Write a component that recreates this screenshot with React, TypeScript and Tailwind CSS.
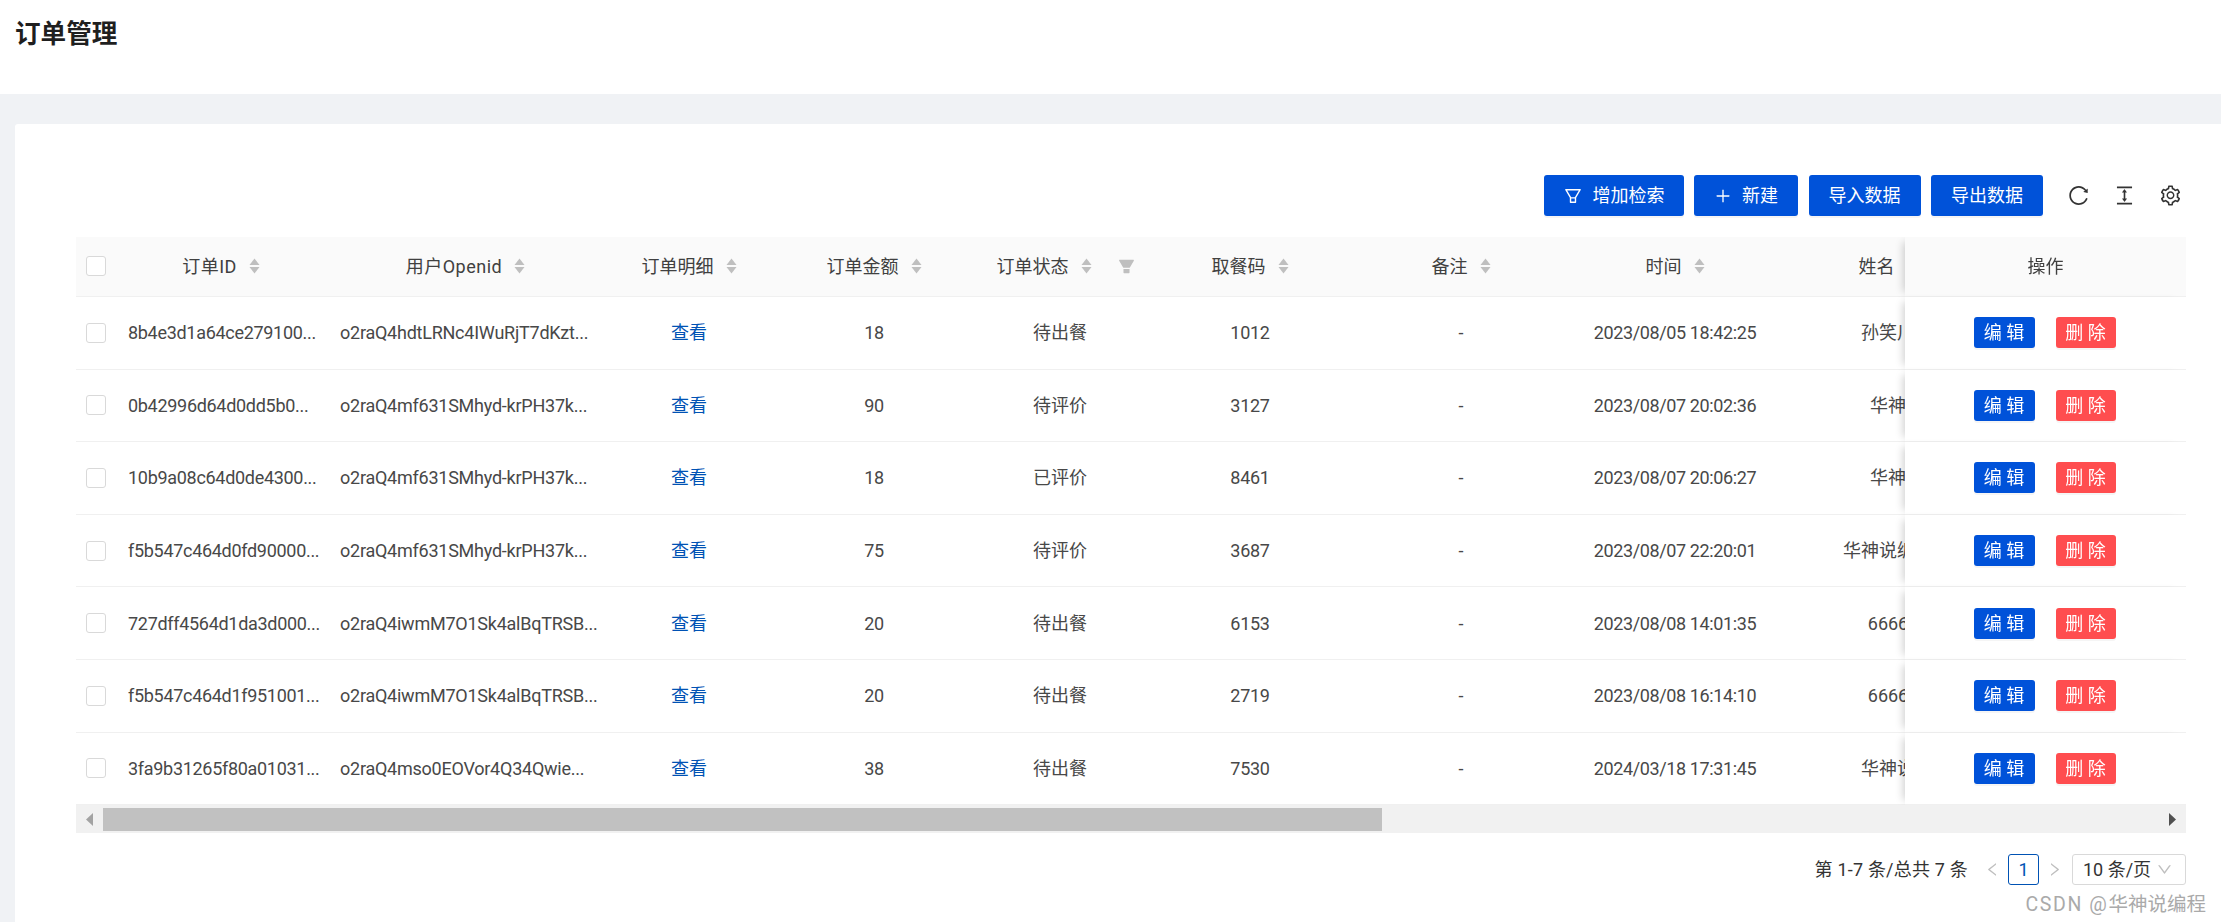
import {
  AiFillFilter,
  AiOutlineColumnHeight,
  AiOutlineDown,
  AiOutlineFilter,
  AiOutlineLeft,
  AiOutlinePlus,
  AiOutlineReload,
  AiOutlineRight,
  AiOutlineSetting
} from 'react-icons/ai'

type Order = {
  id: string
  openid: string
  amount: number
  status: string
  code: number
  time: string
  name: string
}

const ORDERS: Order[] = [
  { id: '8b4e3d1a64ce279100...', openid: 'o2raQ4hdtLRNc4IWuRjT7dKzt...', amount: 18, status: '待出餐', code: 1012, time: '2023/08/05 18:42:25', name: '孙笑川' },
  { id: '0b42996d64d0dd5b0...', openid: 'o2raQ4mf631SMhyd-krPH37k...', amount: 90, status: '待评价', code: 3127, time: '2023/08/07 20:02:36', name: '华神' },
  { id: '10b9a08c64d0de4300...', openid: 'o2raQ4mf631SMhyd-krPH37k...', amount: 18, status: '已评价', code: 8461, time: '2023/08/07 20:06:27', name: '华神' },
  { id: 'f5b547c464d0fd90000...', openid: 'o2raQ4mf631SMhyd-krPH37k...', amount: 75, status: '待评价', code: 3687, time: '2023/08/07 22:20:01', name: '华神说编程' },
  { id: '727dff4564d1da3d000...', openid: 'o2raQ4iwmM7O1Sk4alBqTRSB...', amount: 20, status: '待出餐', code: 6153, time: '2023/08/08 14:01:35', name: '6666' },
  { id: 'f5b547c464d1f951001...', openid: 'o2raQ4iwmM7O1Sk4alBqTRSB...', amount: 20, status: '待出餐', code: 2719, time: '2023/08/08 16:14:10', name: '6666' },
  { id: '3fa9b31265f80a01031...', openid: 'o2raQ4mso0EOVor4Q34Qwie...', amount: 38, status: '待出餐', code: 7530, time: '2024/03/18 17:31:45', name: '华神说' }
]

function Checkbox() {
  return <span className="block mx-auto w-5 h-5 bg-white border border-[#d9d9d9] rounded-[3px]" />
}

function SortIcon() {
  return (
    <svg className="w-[11px] h-[16px] ml-3 shrink-0" viewBox="0 0 11 16" fill="#bfbfbf">
      <path d="M5.500 0.500 10.500 7H0.500z" />
      <path d="M0.500 9H10.500L5.500 15.500z" />
    </svg>
  )
}

function HeadLabel({ label, sort = true, wide = false }: { label: string; sort?: boolean; wide?: boolean }) {
  return (
    <div className="flex items-center justify-center">
      <span className={wide ? 'whitespace-nowrap tracking-[0.5px]' : 'whitespace-nowrap'}>{label}</span>
      {sort && <SortIcon />}
    </div>
  )
}

function ToolButton({ icon, label, width }: { icon?: React.ReactNode; label: string; width: string }) {
  return (
    <button className={`flex items-center justify-center h-[41px] ${width} gap-[10px] bg-[#0052d9] text-white text-[18px] rounded-[3px] shadow-[0_2px_0_rgba(0,0,0,0.04)]`}>
      {icon}
      {label}
    </button>
  )
}

const HEAD_CELL = 'h-[60px] pb-[1px] bg-[#fafafa] border-b border-[#f0f0f0] font-normal text-[#404040]'
const BODY_CELL = 'h-[72.6px] border-b border-[#f0f0f0] text-center whitespace-nowrap'
const FIXED_SHADOW = 'sticky right-0 shadow-[-7px_0_8px_-5px_rgba(0,0,0,0.18)]'

export default function App() {
  return (
    <div className="h-screen flex flex-col overflow-hidden bg-[#f0f2f5] text-[18px] text-[#484848] font-['Roboto','Noto_Sans_CJK_SC',sans-serif]">
      <header className="h-[94px] shrink-0 bg-white pl-[15px] pt-[16px]">
        <h1 className="text-[25.6px] leading-[36px] font-bold text-[#1f1f1f]">订单管理</h1>
      </header>

      <main className="relative flex-1 mt-[30px] ml-[15px] bg-white rounded-tl-[3px] pt-[51px] pl-[61px] pr-[35px]">
        <div className="flex items-center justify-end gap-[10.5px] mb-[21px]">
          <ToolButton width="w-[140px]" icon={<AiOutlineFilter className="text-[20px]" />} label="增加检索" />
          <ToolButton width="w-[104px]" icon={<AiOutlinePlus className="text-[18px]" />} label="新建" />
          <ToolButton width="w-[112px]" label="导入数据" />
          <ToolButton width="w-[112px]" label="导出数据" />
          <div className="flex items-center gap-[23px] ml-[13px] pr-[4.5px] text-[23px] text-[#333]">
            <AiOutlineReload />
            <AiOutlineColumnHeight />
            <AiOutlineSetting />
          </div>
        </div>

        <div className="overflow-hidden">
          <table className="table-fixed w-[2198px] border-separate border-spacing-0">
            <colgroup>
              <col className="w-[40px]" />
              <col className="w-[210px]" />
              <col className="w-[279px]" />
              <col className="w-[168px]" />
              <col className="w-[202px]" />
              <col className="w-[170px]" />
              <col className="w-[210px]" />
              <col className="w-[212px]" />
              <col className="w-[216px]" />
              <col className="w-[210px]" />
              <col className="w-[281px]" />
            </colgroup>
            <thead>
              <tr>
                <th className={HEAD_CELL}><Checkbox /></th>
                <th className={HEAD_CELL}><HeadLabel label="订单ID" wide /></th>
                <th className={HEAD_CELL}><HeadLabel label="用户Openid" wide /></th>
                <th className={HEAD_CELL}><HeadLabel label="订单明细" /></th>
                <th className={HEAD_CELL}><HeadLabel label="订单金额" /></th>
                <th className={HEAD_CELL}>
                  <div className="flex items-center">
                    <div className="flex-1"><HeadLabel label="订单状态" /></div>
                    <span className="w-[32px] pl-[4px] text-[19px] text-[#bfbfbf]"><AiFillFilter /></span>
                  </div>
                </th>
                <th className={HEAD_CELL}><HeadLabel label="取餐码" /></th>
                <th className={HEAD_CELL}><HeadLabel label="备注" /></th>
                <th className={HEAD_CELL}><HeadLabel label="时间" /></th>
                <th className={HEAD_CELL}><HeadLabel label="姓名" /></th>
                <th className={`${HEAD_CELL} ${FIXED_SHADOW}`}><HeadLabel label="操作" sort={false} /></th>
              </tr>
            </thead>
            <tbody>
              {ORDERS.map((order, index) => (
                <tr key={index}>
                  <td className={BODY_CELL}><Checkbox /></td>
                  <td className={`${BODY_CELL} text-left pl-[12px] tracking-[-0.3px]`}>{order.id}</td>
                  <td className={`${BODY_CELL} text-left pl-[14px] tracking-[-0.24px]`}>{order.openid}</td>
                  <td className={BODY_CELL}><a className="text-[#0052b4]">查看</a></td>
                  <td className={`${BODY_CELL} tracking-[-0.3px]`}>{order.amount}</td>
                  <td className={BODY_CELL}>{order.status}</td>
                  <td className={`${BODY_CELL} tracking-[-0.3px]`}>{order.code}</td>
                  <td className={BODY_CELL}>-</td>
                  <td className={`${BODY_CELL} tracking-[-0.37px]`}>{order.time}</td>
                  <td className={BODY_CELL}>{order.name}</td>
                  <td className={`${BODY_CELL} ${FIXED_SHADOW} bg-white`}>
                    <div className="flex items-center justify-center gap-[21px] pr-[2px]">
                      <button className="w-[61px] h-[31px] bg-[#0052d9] text-white rounded-[3px] shadow-[0_2px_0_rgba(0,0,0,0.04)]">编 辑</button>
                      <button className="w-[60px] h-[31px] bg-[#ff4d4f] text-white rounded-[3px] shadow-[0_2px_0_rgba(0,0,0,0.04)]">删 除</button>
                    </div>
                  </td>
                </tr>
              ))}
            </tbody>
          </table>
        </div>

        <div className="flex items-center h-[28px] bg-[#f1f1f1]">
          <svg className="w-[27px] h-[13px] shrink-0" viewBox="0 0 27 13"><path d="M17 0v13l-7-6.500z" fill="#a3a3a3" /></svg>
          <div className="w-[1279px] h-[23px] bg-[#c1c1c1]" />
          <div className="flex-1" />
          <svg className="w-[17px] h-[13px] shrink-0" viewBox="0 0 17 13"><path d="M0 0v13l7-6.500z" fill="#505050" /></svg>
        </div>

        <div className="flex items-center justify-end mt-[21px] text-[#333]">
          <span className="tracking-[0.2px]">第 1-7 条/总共 7 条</span>
          <AiOutlineLeft className="ml-[15.500px] text-[17px] text-[#bfbfbf]" />
          <span className="flex items-center justify-center w-[31px] h-[31px] ml-[7.500px] border border-[#0052b4] text-[#0052b4] rounded-[3px]">1</span>
          <AiOutlineRight className="ml-[6.500px] text-[17px] text-[#bfbfbf]" />
          <div className="flex items-center justify-between w-[114px] h-[31px] ml-[9.500px] pl-[10px] pr-[12px] border border-[#d9d9d9] rounded-[3px]">
            <span className="whitespace-nowrap">10 条/页</span>
            <AiOutlineDown className="text-[17px] text-[#bfbfbf]" />
          </div>
        </div>

        <span className="absolute right-[15px] bottom-[8px] text-[19.5px] leading-none text-[#aaaaaa] whitespace-nowrap">
          <span className="tracking-[1.6px]">CSDN @</span>华神说编程
        </span>
      </main>
    </div>
  )
}
